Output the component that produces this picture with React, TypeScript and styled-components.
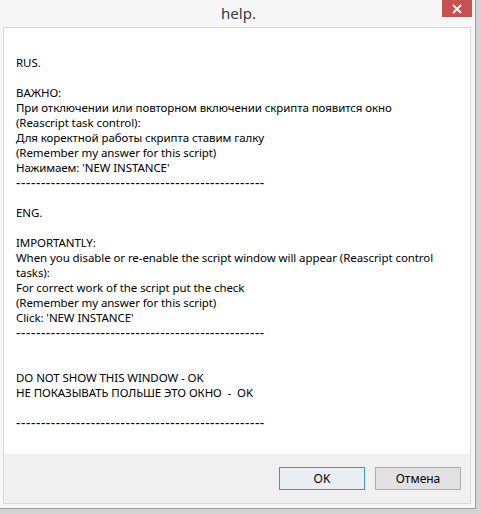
import React from 'react';
import styled, { createGlobalStyle } from 'styled-components';

const GlobalStyle = createGlobalStyle`
  html, body {
    margin: 0;
    padding: 0;
    background: #d4d4d4;
  }
  #root {
    width: 481px;
    height: 514px;
  }
`;

const DASHES = '-'.repeat(50);

const lines: string[] = [
  'RUS.',
  '',
  'ВАЖНО:',
  'При отключении или повторном включении скрипта появится окно',
  '(Reascript task control):',
  'Для коректной работы скрипта ставим галку',
  '(Remember my answer for this script)',
  "Нажимаем: 'NEW INSTANCE'",
  DASHES,
  '',
  'ENG.',
  '',
  'IMPORTANTLY:',
  'When you disable or re-enable the script window will appear (Reascript control',
  'tasks):',
  'For correct work of the script put the check',
  '(Remember my answer for this script)',
  "Click: 'NEW INSTANCE'",
  DASHES,
  '',
  '',
  'DO NOT SHOW THIS WINDOW - OK',
  'НЕ ПОКАЗЫВАТЬ ПОЛЬШЕ ЭТО ОКНО  -  OK',
  '',
  DASHES,
];

const App = () => {
  return (
    <>
      <GlobalStyle />
      <Desktop>
        <Window>
          <TitleBar>
            <span />
            <Title>help.</Title>
            <CloseButton aria-label="close">
              <svg width="10" height="10" viewBox="0 0 10 10">
                <path d="M1 1 L9 9 M9 1 L1 9" stroke="#fff" strokeWidth="1.8" />
              </svg>
            </CloseButton>
          </TitleBar>
          <Client>
            <Content>
              {lines.map((text, i) => (
                <Line key={i} $rule={text === DASHES}>
                  {text || '\u00a0'}
                </Line>
              ))}
            </Content>
            <Footer>
              <Button $primary>OK</Button>
              <Button>Отмена</Button>
            </Footer>
          </Client>
        </Window>
      </Desktop>
    </>
  );
};

export default App;

const Desktop = styled.div`
  width: 481px;
  height: 514px;
  overflow: hidden;
  background: #d4d4d4;
`;

const Window = styled.div`
  width: 476px;
  height: 509px;
  box-sizing: border-box;
  background: #f7f7f7;
  border-right: 1px solid #9c9c9c;
  border-bottom: 1px solid #9c9c9c;
  display: flex;
  flex-direction: column;
`;

const TitleBar = styled.div`
  height: 27px;
  display: grid;
  grid-template-columns: 1fr auto 1fr;
  align-items: start;
`;

const Title = styled.div`
  font-family: 'Noto Sans', 'Open Sans', sans-serif;
  font-size: 15px;
  color: #3a3a3a;
  line-height: 26px;
  padding-left: 2px;
`;

const CloseButton = styled.button`
  justify-self: end;
  margin-right: 3px;
  width: 30px;
  height: 17px;
  border: none;
  padding: 0;
  background: #c75050;
  display: flex;
  align-items: center;
  justify-content: center;
`;

const Client = styled.div`
  flex: 1;
  margin: 0 4px 4px 3px;
  border: 1px solid #d9d9d9;
  display: flex;
  flex-direction: column;
  background: #fff;
`;

const Content = styled.div`
  flex: 1;
  padding: 27px 0 0 12px;
  font-family: 'Noto Sans', 'Open Sans', sans-serif;
  font-size: 11.5px;
  letter-spacing: -0.08px;
  color: #000;
`;

const Line = styled.div<{ $rule?: boolean }>`
  height: 15px;
  line-height: ${p => (p.$rule ? '16px' : '15px')};
  white-space: pre;
  font-size: ${p => (p.$rule ? '13.5px' : 'inherit')};
  letter-spacing: ${p => (p.$rule ? '0.63px' : 'inherit')};
`;

const Footer = styled.div`
  height: 49px;
  background: #f0f0f0;
  display: flex;
  justify-content: flex-end;
  align-items: flex-start;
  gap: 10px;
  padding: 13px 9px 0 0;
  box-sizing: border-box;
`;

const Button = styled.button<{ $primary?: boolean }>`
  width: 86px;
  height: 23px;
  box-sizing: border-box;
  padding: 0;
  font-family: 'Noto Sans', 'Open Sans', sans-serif;
  font-size: 12px;
  color: #000;
  background: ${p => (p.$primary ? '#e9eef3' : '#e1e1e1')};
  border: 1px solid ${p => (p.$primary ? '#3c8fd8' : '#adadad')};
`;
